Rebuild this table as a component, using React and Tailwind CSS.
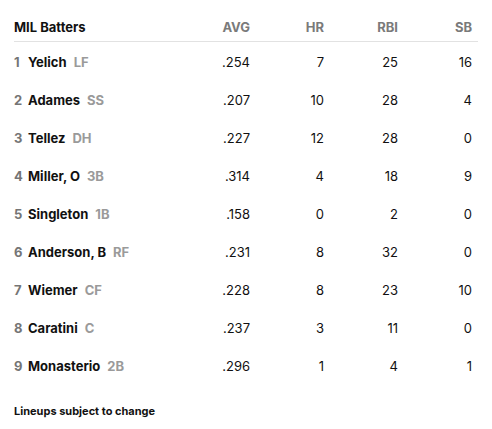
const batters = [
  { n: 1, name: 'Yelich', pos: 'LF', avg: '.254', hr: 7, rbi: 25, sb: 16 },
  { n: 2, name: 'Adames', pos: 'SS', avg: '.207', hr: 10, rbi: 28, sb: 4 },
  { n: 3, name: 'Tellez', pos: 'DH', avg: '.227', hr: 12, rbi: 28, sb: 0 },
  { n: 4, name: 'Miller, O', pos: '3B', avg: '.314', hr: 4, rbi: 18, sb: 9 },
  { n: 5, name: 'Singleton', pos: '1B', avg: '.158', hr: 0, rbi: 2, sb: 0 },
  { n: 6, name: 'Anderson, B', pos: 'RF', avg: '.231', hr: 8, rbi: 32, sb: 0 },
  { n: 7, name: 'Wiemer', pos: 'CF', avg: '.228', hr: 8, rbi: 23, sb: 10 },
  { n: 8, name: 'Caratini', pos: 'C', avg: '.237', hr: 3, rbi: 11, sb: 0 },
  { n: 9, name: 'Monasterio', pos: '2B', avg: '.296', hr: 1, rbi: 4, sb: 1 },
]

export default function App() {
  return (
    <div className="w-[492px] h-[429px] bg-white px-[14px] pt-[17px] font-['Inter',sans-serif] text-[13px]">
      <div className="w-[464px]">
        <div className="grid grid-cols-[162px_74px_74px_74px_74px] border-b border-[#e2e2e2] pb-[4px] leading-5">
          <div className="font-bold text-[#111]">MIL Batters</div>
          <div className="text-right font-bold text-[#7a7a7a]">AVG</div>
          <div className="text-right font-bold text-[#7a7a7a]">HR</div>
          <div className="text-right font-bold text-[#7a7a7a]">RBI</div>
          <div className="text-right font-bold text-[#7a7a7a]">SB</div>
        </div>
        {batters.map((b) => (
          <div key={b.n} className="grid h-[38px] grid-cols-[162px_74px_74px_74px_74px] items-center pt-[4px]">
            <div className="flex items-center whitespace-nowrap">
              <span className="w-[14px] font-bold text-[#757575]">{b.n}</span>
              <span className="font-bold text-[#111]">{b.name}</span>
              <span className="ml-[7px] font-bold text-[#9a9a9a]">{b.pos}</span>
            </div>
            <div className="text-right text-[#111]">{b.avg}</div>
            <div className="text-right text-[#111]">{b.hr}</div>
            <div className="text-right text-[#111]">{b.rbi}</div>
            <div className="text-right text-[#111]">{b.sb}</div>
          </div>
        ))}
        <div className="mt-[19px] text-[11px] leading-4 font-bold text-[#111]">Lineups subject to change</div>
      </div>
    </div>
  )
}
